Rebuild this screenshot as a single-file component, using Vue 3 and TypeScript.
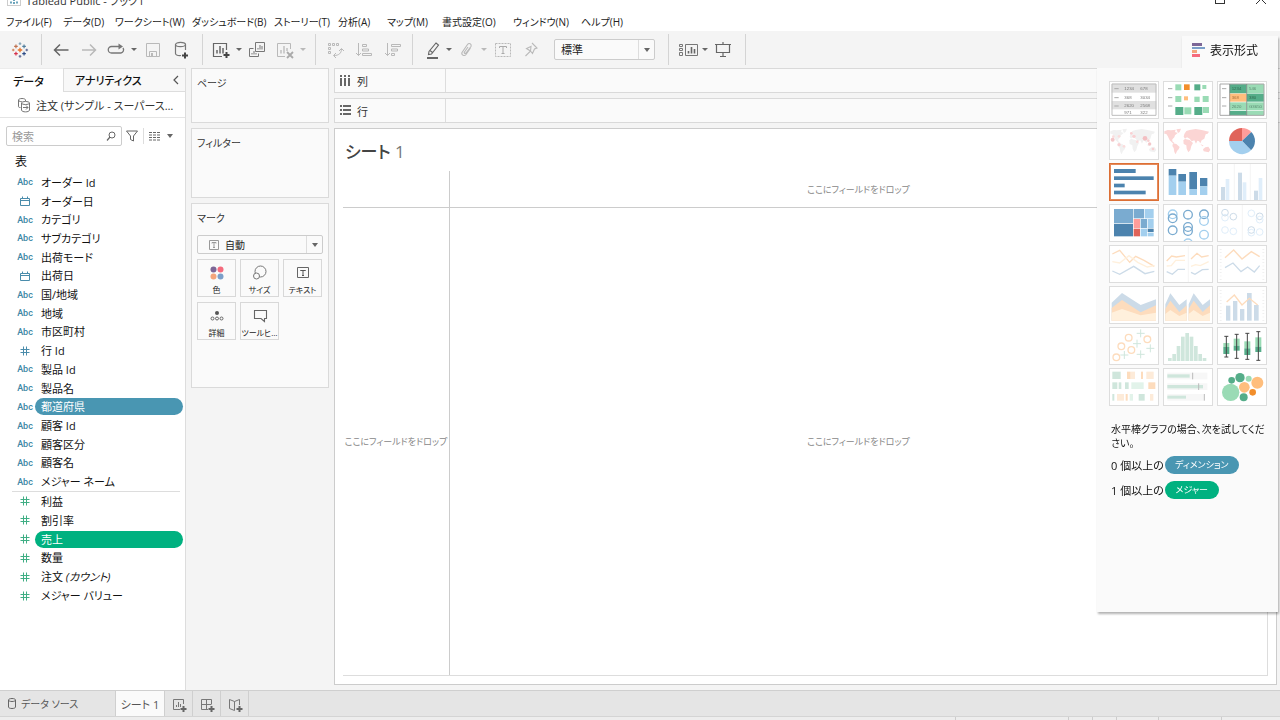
<script setup lang="ts">
import { ref } from 'vue'

/* ---------- svg markup helpers ---------- */
const rect = (x: number, y: number, w: number, h: number, fill: string) =>
  `<rect x="${x}" y="${y}" width="${w}" height="${h}" fill="${fill}"/>`
const disc = (x: number, y: number, r: number, fill: string) =>
  `<circle cx="${x}" cy="${y}" r="${r}" fill="${fill}"/>`
const ring = (x: number, y: number, r: number, stroke: string, w = 4) =>
  `<circle cx="${x}" cy="${y}" r="${r}" fill="none" stroke="${stroke}" stroke-width="${w}"/>`
const line = (d: string, stroke: string, w = 4) =>
  `<path d="${d}" fill="none" stroke="${stroke}" stroke-width="${w}"/>`
const area = (d: string, fill: string) => `<path d="${d}" fill="${fill}"/>`
const label = (x: number, y: number, t: string, fill = '#777') =>
  `<text x="${x}" y="${y}" font-size="13" font-family="Liberation Sans, sans-serif" fill="${fill}">${t}</text>`

/* ---------- palette ---------- */
const LG = '#9adbb5', DG = '#55ad89', OR = '#f28e2b', PE = '#ffbe7d'
const DB = '#4c83ae', MB = '#7aabd0', LB = '#a3cfee'
const fB = '#ccdbe8', fLB = '#e0eefa', fO = '#fddcbd', fY = '#fff0dc', fG = '#cfe6dc', fLG = '#e2f3ea'

const world = [
  'M4 28L14 24L24 25L38 23L36 30L44 33L36 40L34 46L28 52L28 58L34 63L30 64L20 55L14 42L10 36L4 35Z',
  'M40 22L54 20L50 30L45 33Z',
  'M30 64L40 66L50 75L47 82L42 87L38 97L34 90L32 78L28 72Z',
  'M62 44L64 36L70 27L80 24L98 21L116 24L138 29L134 35L128 37L124 50L116 55L112 64L108 58L103 56L99 65L94 55L86 58L80 50L72 46L66 50Z',
  'M61 55L66 51L80 54L90 63L85 72L82 84L76 91L71 80L70 70L62 66Z',
  'M120 82L127 76L136 74L142 83L137 91L122 88Z',
  'M112 66L122 71L118 73Z',
].join('')

const dashes = (x: number) => [23, 50, 75].map((y) => line(`M${x} ${y}h13`, '#aaa', 3)).join('')

const thumbs = [
  { name: 'テキスト表', art: rect(8, 8, 134, 27, '#e0e0e0') + rect(8, 60, 134, 25, '#e0e0e0') + line('M9 9H141V103H9Z', '#bdbdbd', 3) + dashes(16)
    + label(46, 28, '1234') + label(94, 28, '678') + label(46, 53, '368') + label(94, 53, '3034') + label(46, 77, '2620') + label(94, 77, '2568') + label(46, 99, '971') + label(94, 99, '322') },
  { name: 'ヒート マップ', art: dashes(15) + rect(37, 10, 18, 18, LG) + rect(63, 10, 17, 17, OR) + rect(94, 10, 18, 18, DG) + rect(118, 12, 12, 12, LG)
    + rect(37, 45, 18, 18, LG) + rect(63, 46, 12, 12, PE) + rect(94, 47, 16, 16, LG) + rect(119, 45, 18, 18, LG)
    + rect(37, 78, 24, 24, DG) + rect(64, 79, 21, 21, LG) + rect(94, 78, 24, 24, DG) + rect(120, 78, 18, 18, LG) },
  { name: 'ハイライト表', art: rect(38, 9, 51, 28, DG) + rect(90, 9, 51, 28, LG) + rect(38, 38, 51, 24, PE) + rect(90, 38, 51, 24, DG)
    + rect(38, 64, 51, 24, LG) + rect(90, 64, 51, 24, LG) + rect(38, 90, 51, 13, DG) + rect(90, 90, 51, 13, LG) + line('M9 9H141V103H9Z', '#a8a8a8', 3) + line('M38 9V103M89 9V103', '#777', 2) + dashes(15)
    + label(44, 28, '1234', '#2f6b50') + label(96, 28, '546', '#5a8b70') + label(44, 54, '368', '#a8703a') + label(96, 54, '380', '#2f6b50') + label(44, 80, '2620', '#5a8b70') + label(96, 80, 'G3650', '#5a8b70') },
  { name: '記号マップ', art: area(world, '#f1f1f1') + disc(11, 53, 6, '#f3c6c8') + disc(30, 43, 4, '#fbdcdc') + disc(67, 34, 4, '#f9d0d2') + disc(75, 43, 5, '#f9d0d2') + disc(108, 49, 7, '#f3bfc2')
    + disc(118, 56, 4, '#f9d0d2') + disc(122, 66, 5, '#f3c6c8') + disc(30, 68, 5, '#f9d0d2') + disc(45, 73, 4, '#fbdcdc') + disc(85, 59, 4, '#fbdcdc') + disc(132, 81, 4, '#f9d0d2') + disc(13, 44, 4, '#fbdcdc') },
  { name: 'マップ', art: area(world, '#fbd5d4') },
  { name: '円グラフ', art: area('M75 57H36A39 39 0 0 1 75 18Z', '#e0645a') + area('M75 57V18A39 39 0 0 1 103 30Z', '#ff9d9a') + area('M75 57L103 30A39 39 0 0 1 102 85Z', DB) + area('M75 57L102 85A39 39 0 0 1 36 57Z', LB) },
  { name: '水平棒', art: rect(15, 18, 65, 12, DB) + rect(15, 40, 119, 11, DB) + rect(15, 62, 32, 11, DB) + rect(15, 83, 95, 11, DB) },
  { name: '積み上げ棒', art: rect(17, 18, 23, 20, DB) + rect(17, 38, 23, 58, LB) + rect(46, 33, 23, 23, DB) + rect(46, 56, 23, 40, LB) + rect(79, 27, 23, 51, DB) + rect(79, 78, 23, 18, LB) + rect(111, 45, 22, 25, DB) + rect(111, 70, 22, 26, LB) },
  { name: '並列棒', art: line('M52 3V111M100 3V111', '#eee', 2) + rect(12, 72, 12, 39, fB) + rect(26, 48, 11, 63, fLB) + rect(63, 29, 12, 82, fB) + rect(77, 58, 11, 53, fLB) + rect(111, 83, 12, 28, fB) + rect(125, 45, 11, 66, fLB) },
  { name: 'ツリーマップ', art: rect(15, 15, 57, 43, MB) + rect(15, 60, 57, 37, DB) + rect(74, 15, 31, 28, MB) + rect(107, 15, 27, 28, LB) + rect(74, 45, 19, 27, '#ff9d9a') + rect(95, 45, 19, 27, MB) + rect(116, 45, 18, 27, LB)
    + rect(74, 74, 19, 23, '#e0645a') + rect(95, 74, 19, 23, LB) + rect(116, 74, 18, 10, DB) + rect(116, 86, 18, 11, LB) },
  { name: '円ビュー', art: ring(29, 31, 13, LB) + ring(29, 43, 13, MB) + ring(29, 79, 13, MB) + ring(75, 32, 13, MB) + ring(75, 69, 13, MB) + ring(75, 81, 13, MB) + ring(75, 118, 13, LB) + ring(123, 31, 13, MB) + ring(123, 51, 13, LB) + ring(123, 92, 13, LB) },
  { name: '並列円', art: line('M76 3V111', '#eee', 2) + ring(24, 26, 10, fB, 3) + ring(24, 41, 10, fLB, 3) + ring(49, 38, 10, fB, 3) + ring(24, 78, 10, fLB, 3) + ring(49, 82, 10, fLB, 3) + ring(103, 28, 10, fLB, 3) + ring(128, 37, 10, fB, 3) + ring(128, 47, 10, fLB, 3) + ring(103, 78, 10, fB, 3) + ring(103, 86, 10, fLB, 3) + ring(128, 84, 10, fLB, 3) },
  { name: '折れ線 (連続)', art: line('M10 27L32 16L62 52L80 34L105 46L136 64', fO) + line('M10 50L32 54L60 32L86 52L115 66L136 62', fY) + line('M10 78L32 88L74 64L108 86L136 79', fB) },
  { name: '折れ線 (不連続)', art: line('M76 3V111', '#eee', 2) + line('M11 48L26 33L40 36L66 32M84 42L102 25L116 36L137 32', fO) + line('M11 63L25 62L38 46L66 46M84 64L98 59L112 62L137 50', fY) + line('M11 80L28 88L45 73L66 73M84 82L96 88L118 74L137 73', fB) },
  { name: '二重線', art: line('M11 12V104M139 12V104', '#ececec', 6).replace('/>', ' stroke-dasharray="2 8"/>') + line('M24 38L50 15L75 42L103 20L128 35', fO) + line('M24 68L48 54L72 80L92 66L112 81L128 62', fB) },
  { name: '面グラフ (連続)', art: area('M8 50L39 21L95 57L141 40V104H8Z', fB) + area('M8 66L39 42L95 79L141 58V104H8Z', fO) + area('M8 80L39 69L95 88L141 80V104H8Z', fY) },
  { name: '面グラフ (不連続)', art: [7, 77].map((x) => area(`M${x} 55L${x + 15} 22L${x + 42} 57L${x + 64} 40V104H${x}Z`, fB) + area(`M${x} 68L${x + 15} 44L${x + 42} 78L${x + 64} 58V104H${x}Z`, fO) + area(`M${x} 84L${x + 15} 72L${x + 42} 90L${x + 64} 80V104H${x}Z`, fY)).join('') },
  { name: '二重の組み合わせ', art: line('M11 12V104M139 12V104', '#ececec', 6).replace('/>', ' stroke-dasharray="2 8"/>') + rect(27, 59, 13, 45, fB) + rect(48, 45, 13, 59, fB) + rect(69, 69, 13, 35, fB) + rect(90, 21, 14, 83, fB) + rect(111, 57, 14, 47, fB) + line('M29 48L52 27L75 57L97 37L122 57', fO) },
  { name: '散布図', art: ring(59, 32, 10, fO) + ring(115, 37, 10, fO) + ring(37, 58, 10, fO) + ring(67, 69, 10, fO) + ring(22, 91, 10, fO) + [[95, 19], [84, 50], [46, 84], [95, 82], [124, 64]].map(([x, y]) => line(`M${x - 12} ${y}h24M${x} ${y - 12}v24`, fG, 3)).join('') },
  { name: 'ヒストグラム', art: [93, 81, 57, 29, 18, 29, 57, 81, 93].map((y, i) => rect(15 + i * 13, y, 11, 102 - y, fG)).join('') },
  { name: '箱ヒゲ図', art: [[28, 28, 48, 60, 81, 90], [59, 22, 35, 56, 71, 94], [91, 19, 43, 64, 84, 97], [124, 14, 31, 59, 75, 100]].map(([x, a, b, c, d, e]) => rect(x - 9, b, 18, c - b, LG) + rect(x - 9, c, 18, d - c, DG) + line(`M${x} ${a}V${e}M${x - 6} ${a}h12M${x - 6} ${e}h12`, '#444', 3)).join('') },
  { name: 'ガント ビュー', art: rect(10, 11, 25, 22, fG) + rect(54, 11, 11, 22, fO) + rect(66, 11, 12, 22, '#fdebd9') + rect(96, 11, 6, 22, fO) + rect(112, 11, 22, 22, '#fdebd9')
    + rect(10, 43, 15, 20, fG) + rect(29, 43, 8, 20, fG) + rect(48, 43, 11, 20, fG) + rect(67, 43, 37, 20, fLG) + rect(118, 43, 21, 20, fO)
    + rect(10, 78, 6, 20, fG) + rect(24, 78, 21, 20, '#fdebd9') + rect(50, 78, 6, 20, fO) + rect(62, 78, 10, 20, fLG) + rect(89, 78, 18, 20, fG) + rect(123, 78, 10, 20, '#fdebd9') },
  { name: 'ブレット グラフ', art: rect(13, 14, 120, 20, '#f7f7f7') + rect(13, 46, 120, 20, '#f7f7f7') + rect(13, 78, 110, 20, '#f7f7f7') + rect(13, 19, 67, 10, fG) + rect(13, 51, 107, 10, fG) + rect(13, 83, 56, 9, fG) + line('M89 14v20M107 46v20M124 78v20', '#bbb', 3) },
  { name: 'パックバブル', art: disc(41, 73, 26, LG) + disc(44, 37, 10, DG) + disc(69, 29, 14, DG) + disc(95, 32, 9, LG) + disc(82, 58, 16, PE) + disc(121, 44, 18, PE) + disc(107, 73, 10, OR) + disc(80, 88, 12, DG) },
]

/* ---------- toolbar glyphs, drawn in a 20 x 20 box ---------- */
const s = (d: string, c = '#666', w = 1) => line(d, c, w)
const plus = (x: number, y: number, c = '#555') => s(`M${x - 3} ${y}h6M${x} ${y - 3}v6`, c, 2)
const cross = (x: number, y: number, r: number, c: string, w = 1) => s(`M${x - r} ${y}h${r * 2}M${x} ${y - r}v${r * 2}`, c, w)
const G = '#b9b9b9'

const glyphs: Record<string, string> = {
  logo: cross(10, 10, 2.5, '#e8762c', 1.5) + cross(5.5, 6, 2, '#c0714f', 1.3) + cross(14.5, 6, 2, '#4f7d9c', 1.3) + cross(5.5, 14, 2, '#d6304a', 1.3) + cross(14.5, 14, 2, '#2c4a86', 1.3)
    + cross(10, 3, 1.5, '#7a9db3', 1.2) + cross(10, 17, 1.5, '#5b6591', 1.2) + cross(2.5, 10, 1.5, '#d3835c', 1.2) + cross(17.5, 10, 1.5, '#5b6591', 1.2),
  back: s('M17.500 10H3.500M9 4.500L3.500 10L9 15.500', '#666', 1.5),
  forward: s('M3 10H16.500M11 4.500L16.500 10L11 15.500', G, 1.5),
  redo: s('M15 13H5.500A3.200 3.200 0 0 1 5.500 6.500H13.500M15 13A3.200 3.200 0 0 0 17 8', '#777', 1.3) + area('M12.500 3.500L17 6.500L12.500 9.500Z', '#777'),
  save: s('M3.500 3.500H16.500V16.500H3.500Z M6.500 16V11.500H13.500V16', G, 1) + rect(8, 13, 2, 3, G),
  source: s('M4.500 4.500V13.500C4.500 15 7 16 10 15.500M14.500 4.500V10', '#777', 1.2) + '<ellipse cx="9.500" cy="4.500" rx="5" ry="2.200" fill="none" stroke="#777" stroke-width="1.200"/>' + plus(14, 15.5, '#444'),
  sheetAdd: s('M15.500 10V3.500H2.500V16.500H11', '#666', 1.2) + s('M6 13.500V10M9 13.500V6M12 13.500V8', '#666', 1.5) + plus(15.5, 15, '#444'),
  duplicate: s('M8.500 2.500H17.500V11.500H8.500ZM6.500 8.500H2.500V16.500H11.500V13.500', '#777') + s('M11 9.500V8M13 9.500V5M15 9.500V6M5 14.500V13M7 14.500V11M9 14.500V13', '#777'),
  clear: s('M15.500 9V3.500H2.500V16.500H10', G) + s('M6 13.500V10M9 13.500V6M12 11V8', G, 1.3) + s('M12 12L18 18M18 12L12 18', '#aaa', 1.8),
  swap: s('M3.500 3.500h2v2h-2zM7.500 3.500h2v2h-2zM11.500 3.500h2v2h-2zM3.500 7.500h2v2h-2zM3.500 11.500h2v2h-2z', G) + s('M16.500 9C16.500 13 14 15.500 9 15.500M14 11L16.500 8.500L19 11M11 13L8.500 15.500L11 18', G),
  sortUp: s('M4.500 3V15.500M2 13L4.500 15.500L7 13', G) + s('M8.500 4.500h4v2h-4zM8.500 9h6v2h-6zM8.500 13.500h9v2h-9z', G),
  sortDown: s('M4.500 3V15.500M2 13L4.500 15.500L7 13', G) + s('M8.500 4.500h9v2h-9zM8.500 9h6v2h-6zM8.500 13.500h3v2h-3z', G),
  pen: s('M14 3L16.500 5L9.500 14L6.500 14.500L7 11.500ZM8 10.500L10.500 12.500', '#666', 1.1) + rect(5, 17, 11, 2, '#666'),
  clip: s('M14.500 8L10 14.500C8.500 16.500 5 15 6 12.500L11.500 4.500C13 2.500 16 4 15 6.500L10 13C9 14 7.500 13 8.500 12L12 7', G, 1.1),
  textBox: s('M2.500 3.500H17.500V16.500H2.500Z', G).replace('/>', ' stroke-dasharray="2 1"/>') + s('M6.500 8V6.500H13.500V8M10 6.500V13.500M8.500 13.500H11.500', '#aaa'),
  pin: s('M11 3L16 8L13.500 9L11.500 13.500L9.500 11L4.500 16M9.500 11L5.500 8.500L10 6.500Z', G, 1.1),
  fit: s('M1.500 4.500h3v2h-3zM1.500 8.500h3v2h-3zM1.500 12.500h3v3h-3zM7.500 4.500H19.500V15.500H7.500Z', '#777') + s('M10.500 13.500V11M13.500 13.500V7M16.500 13.500V9', '#666', 1.6),
  present: s('M2 4.500H18M3.500 4.500V12.500H16.500V4.500M10 2V4M10 12.500V16M7 16.500H13', '#666', 1.2),
}

interface Tool { icon?: string; label: string; width: string }
const caret = (label: string, width = 'w8'): Tool => ({ label, width })
const tool = (icon: string, label: string, width = 'w28'): Tool => ({ icon, label, width })
const groups: { cls: string; tools: Tool[] }[] = [
  { cls: 'g1', tools: [tool('back', '元に戻す'), tool('forward', 'やり直し'), tool('redo', '再生', 'w26'), caret('再生メニュー', 'w10'), tool('save', '保存'), tool('source', '新しいデータ ソース')] },
  { cls: 'g2', tools: [tool('sheetAdd', '新しいワークシート'), caret('新規メニュー'), tool('duplicate', '複製'), tool('clear', 'クリア'), caret('クリア メニュー')] },
  { cls: 'g3', tools: [tool('swap', '行と列の交換', 'w29'), tool('sortUp', '昇順', 'w29'), tool('sortDown', '降順', 'w29')] },
  { cls: 'g4', tools: [tool('pen', 'ハイライト', 'w26'), caret('ハイライト メニュー'), tool('clip', 'グループ', 'w26'), caret('グループ メニュー', 'w10'), tool('textBox', 'ラベル'), tool('pin', '軸の固定')] },
]
const groupLast: Tool[] = [tool('fit', 'カードの表示', 'w26'), caret('カード メニュー'), tool('present', 'プレゼンテーション')]
const muted = ['クリア メニュー', 'グループ メニュー']

const menus = ['ファイル(F)', 'データ(D)', 'ワークシート(W)', 'ダッシュボード(B)', 'ストーリー(T)', '分析(A)', 'マップ(M)', '書式設定(O)', 'ウィンドウ(N)', 'ヘルプ(H)']

type Kind = 'abc' | 'date' | 'num'
const dims: [Kind, string][] = [
  ['abc', 'オーダー Id'], ['date', 'オーダー日'], ['abc', 'カテゴリ'], ['abc', 'サブカテゴリ'], ['abc', '出荷モード'], ['date', '出荷日'],
  ['abc', '国/地域'], ['abc', '地域'], ['abc', '市区町村'], ['num', '行 Id'], ['abc', '製品 Id'], ['abc', '製品名'], ['abc', '都道府県'],
  ['abc', '顧客 Id'], ['abc', '顧客区分'], ['abc', '顧客名'], ['abc', 'メジャー ネーム'],
]
const measures = ['利益', '割引率', '売上', '数量', '注文 (カウント)', 'メジャー バリュー']
const selected = ref(['都道府県', '売上'])

const marks = [
  { label: '色', art: disc(6.5, 6.5, 3, '#7d6797') + disc(13.5, 6.5, 3, '#f56b7d') + disc(6.5, 13.5, 3, '#f4a57c') + disc(13.5, 13.5, 3, '#7b9fc9') },
  { label: 'サイズ', art: ring(10.5, 8.5, 5.5, '#777', 1) + `<circle cx="6.500" cy="13" r="3" fill="#fafafa" stroke="#777" stroke-width="1"/>` },
  { label: 'テキスト', art: s('M4.500 4.500H15.500V14.500H4.500Z', '#666') + s('M7.500 8V7.500H12.500V8M10 7.500V12.500M9 12.500H11', '#555') },
  { label: '詳細', art: disc(10, 7, 2, '#555') + ring(5.5, 12.500, 1.5, '#666', 1) + ring(10, 12.500, 1.5, '#666', 1) + ring(14.5, 12.500, 1.5, '#666', 1) },
  { label: 'ツールヒ…', art: s('M4.500 4.500H16.500V12.500H14.500V15.500L11 12.500H4.500Z', '#666', 1.1) },
]
const sheetButtons = [
  { label: '新しいワークシート', art: s('M12.500 8V3.500H2.500V13.500H9', '#777') + s('M5.500 11V9M7.500 11V6M9.500 11V8', '#777') + plus(12.5, 13, '#666') },
  { label: '新しいダッシュボード', art: s('M12.500 8V3.500H2.500V13.500H9M7.500 3.500V13.500M2.500 8.500H12.500', '#777') + plus(12.5, 13, '#666') },
  { label: '新しいストーリー', art: s('M12.500 9V3.500L7.500 5.500L2.500 3.500V12.500L7.500 14.500V5.500', '#777') + plus(12.5, 13, '#666') },
]
</script>

<template>
  <div class="app" lang="ja">
    <header class="titlebar">
      <svg class="app-icon" viewBox="0 0 14 14" aria-hidden="true">
        <rect x="0.500" y="0.500" width="13" height="13" fill="#fff" stroke="#ccc" />
        <path d="M7 5v4M5 7h4M4 3v2M10 3v2M4 9.500v2M10 9.500v2M7 10v2M2 7h2M10 7h2" stroke="#3c87a5" stroke-width="1.500" />
      </svg>
      <span class="title">Tableau Public - ブック1</span>
      <span class="window-box"></span>
      <svg class="window-close" viewBox="0 0 10 10" aria-hidden="true"><path d="M0 0L10 10M10 0L0 10" stroke="#333" stroke-width="1" /></svg>
    </header>

    <nav class="menubar">
      <button v-for="m in menus" :key="m" type="button">{{ m }}</button>
    </nav>

    <div class="toolbar">
      <svg class="logo" viewBox="0 0 20 20" aria-hidden="true" v-html="glyphs.logo"></svg>
      <div v-for="g in groups" :key="g.cls" class="group" :class="g.cls">
        <button v-for="t in g.tools" :key="t.label" type="button" class="tool" :class="t.width" :aria-label="t.label">
          <svg v-if="t.icon" viewBox="0 0 20 20" v-html="glyphs[t.icon]"></svg>
          <i v-else class="caret" :class="{ muted: muted.includes(t.label) }"></i>
        </button>
      </div>
      <span class="select fit-select">
        <select aria-label="ビューのサイズ"><option>標準</option></select>
        <i class="caret dark"></i>
      </span>
      <div class="group g5">
        <button v-for="t in groupLast" :key="t.label" type="button" class="tool" :class="t.width" :aria-label="t.label">
          <svg v-if="t.icon" viewBox="0 0 20 20" v-html="glyphs[t.icon]"></svg>
          <i v-else class="caret"></i>
        </button>
      </div>
    </div>

    <main class="workspace">
      <aside class="data-pane">
        <div class="pane-tabs">
          <button type="button" class="on">データ</button>
          <button type="button" class="off">
            アナリティクス
            <svg viewBox="0 0 6 10" aria-hidden="true"><path d="M5 1L1 5L5 9" fill="none" stroke="#555" stroke-width="1.200" /></svg>
          </button>
        </div>
        <div class="source">
          <svg viewBox="0 0 16 16" aria-hidden="true">
            <path d="M4.500 10.500C2.500 10.500 2.500 10 2.500 9V3C2.500 1 9.500 1 9.500 3V4M2.500 3C2.500 5 6 4.500 6 4.500M5.500 6V13C5.500 15.500 13.500 15.500 13.500 13V6C13.500 4 5.500 4 5.500 6C5.500 8 13.500 8 13.500 6M7 10.500H12M10 8.500L12 10.500L10 12.500" fill="none" stroke="#777" />
          </svg>
          <span>注文 (サンプル - スーパース…</span>
        </div>
        <div class="search">
          <label class="search-box">
            <input type="text" placeholder="検索" aria-label="検索" />
            <svg viewBox="0 0 10 10" aria-hidden="true"><circle cx="6" cy="4" r="3" fill="none" stroke="#666" /><path d="M4 6L1 9.500" stroke="#666" stroke-width="1.200" /></svg>
          </label>
          <button type="button" aria-label="フィルター"><svg viewBox="0 0 12 12"><path d="M0.500 1H11.500L7.500 6V11L4.500 9.500V6Z" fill="none" stroke="#666" /></svg></button>
          <button type="button" class="view-as" aria-label="表示方法"><svg viewBox="0 0 12 10"><path d="M0 1.500H12M0 4H12M0 6.500H12M0 9H12" stroke="#666" stroke-width="1.200" stroke-dasharray="3 1" /></svg></button>
          <i class="caret dark"></i>
        </div>
        <h2>表</h2>
        <ul class="fields dims">
          <li v-for="[k, n] in dims" :key="n" :class="{ sel: selected.includes(n) }">
            <span class="kind">
              <template v-if="k === 'abc'">Abc</template>
              <svg v-else-if="k === 'date'" viewBox="0 0 10 10"><path d="M0.500 2.500H9.500V9.500H0.500ZM0.500 4.500H9.500M2.500 0.500V2.500M7.500 0.500V2.500" fill="none" stroke="#4a8cab" /></svg>
              <svg v-else viewBox="0 0 10 10"><path d="M3.500 0.500V9.500M6.500 0.500V9.500M0.500 3.500H9.500M0.500 6.500H9.500" fill="none" stroke="#4a8cab" /></svg>
            </span>
            <span class="name">{{ n }}</span>
          </li>
        </ul>
        <ul class="fields measures">
          <li v-for="n in measures" :key="n" :class="{ sel: selected.includes(n) }">
            <span class="kind"><svg viewBox="0 0 10 10"><path d="M3.500 0.500V9.500M6.500 0.500V9.500M0.500 3.500H9.500M0.500 6.500H9.500" fill="none" stroke="#3fae84" /></svg></span>
            <span class="name"><template v-if="n === '注文 (カウント)'">注文 <em>(カウント)</em></template><template v-else>{{ n }}</template></span>
          </li>
        </ul>
      </aside>

      <section class="cards">
        <div class="card pages"><h3>ページ</h3></div>
        <div class="card filters"><h3>フィルター</h3></div>
        <div class="card marks">
          <h3>マーク</h3>
          <span class="select mark-select">
            <svg viewBox="0 0 10 10" aria-hidden="true"><path d="M0.500 0.500H9.500V9.500H0.500ZM3 3.500V2.500H7V3.500M5 2.500V7.500M4 7.500H6" fill="none" stroke="#999" /></svg>
            <select aria-label="マークの種類"><option>自動</option></select>
            <i class="caret dark"></i>
          </span>
          <div class="mark-grid">
            <button v-for="m in marks" :key="m.label" type="button">
              <svg viewBox="0 0 20 20" v-html="m.art"></svg>
              <span>{{ m.label }}</span>
            </button>
          </div>
        </div>
      </section>

      <section class="canvas">
        <div class="shelf">
          <div class="shelf-name"><svg viewBox="0 0 11 11" aria-hidden="true"><path d="M1 0v2M5 0v2M9 0v2M1 3v8M5 3v8M9 3v8" stroke="#666" stroke-width="2" /></svg>列</div>
        </div>
        <div class="shelf">
          <div class="shelf-name"><svg viewBox="0 0 11 11" aria-hidden="true"><path d="M0 1h2M0 5h2M0 9h2M3 1h8M3 5h8M3 9h8" stroke="#666" stroke-width="2" /></svg>行</div>
        </div>
        <div class="view">
          <h1><b>シート</b> 1</h1>
          <div class="drop-grid">
            <div class="corner"></div>
            <div class="drop columns">ここにフィールドをドロップ</div>
            <div class="drop rows">ここにフィールドをドロップ</div>
            <div class="drop body">ここにフィールドをドロップ</div>
          </div>
        </div>
      </section>
    </main>

    <footer class="sheets">
      <button type="button" class="data-source">
        <svg viewBox="0 0 8 11" aria-hidden="true"><path d="M0.500 2V9C0.500 11 7.500 11 7.500 9V2C7.500 0 0.500 0 0.500 2C0.500 4 7.500 4 7.500 2" fill="none" stroke="#666" /></svg>
        データ ソース
      </button>
      <button type="button" class="current">シート 1</button>
      <button v-for="b in sheetButtons" :key="b.label" type="button" class="add" :aria-label="b.label"><svg viewBox="0 0 16 16" v-html="b.art"></svg></button>
    </footer>
    <div class="status"><i class="s1"></i><i class="s2"></i><i class="s2"></i><i class="s3"></i><i class="s4"></i><i class="s5"></i></div>

    <aside class="show-me">
      <button type="button" class="show-tab">
        <svg viewBox="0 0 13 14" aria-hidden="true">
          <rect width="10" height="3" fill="#7d6797" /><rect y="4" width="13" height="2" fill="#7b9fc9" /><rect y="7" width="5" height="3" fill="#f4a57c" /><rect y="11" width="8" height="3" fill="#f56b7d" />
        </svg>
        表示形式
      </button>
      <div class="show-body">
        <div class="thumbs">
          <button v-for="(t, i) in thumbs" :key="t.name" type="button" :class="{ picked: i === 6 }" :aria-label="t.name">
            <svg viewBox="3 3 144 108" v-html="t.art"></svg>
          </button>
        </div>
        <p>水平棒グラフの場合、次を試してください。</p>
        <div class="need">0 個以上の <span class="pill dim">ディメンション</span></div>
        <div class="need">1 個以上の <span class="pill mea">メジャー</span></div>
      </div>
    </aside>
  </div>
</template>

<style>
html, body { margin: 0; background: #f4f4f4; }
</style>

<style scoped>
.app, .app button, .app input, .app select {
  font-family: "Open Sans", "Noto Sans CJK JP", sans-serif;
  font-feature-settings: "palt";
}
.app { position: relative; display: flex; flex-direction: column; height: 100vh; overflow: hidden; background: #f4f4f4; color: #333; font-size: 11px; }
.app *, .app *::before { box-sizing: border-box; }
button { border: 0; padding: 0; margin: 0; background: none; color: inherit; font-size: 11px; }
h1, h2, h3, p, ul { margin: 0; padding: 0; font-weight: 400; }
ul { list-style: none; }
svg { display: block; flex: none; }

.titlebar { display: flex; align-items: flex-end; height: 12px; padding: 0 14px 0 7px; overflow: hidden; background: #fff; flex: none; }
.app-icon { width: 14px; height: 14px; margin-bottom: 6px; }
.title { margin-left: 5px; line-height: 16px; margin-bottom: 3px; font-size: 11px; white-space: nowrap; }
.window-box { width: 10px; height: 10px; border: 1px solid #333; margin-left: auto; margin-bottom: 8px; }
.window-close { width: 10px; height: 10px; margin: 0 0 8px 31px; }

.menubar { display: grid; grid-template-columns: 57px 52px 77px 82px 64px 49px 55px 71px 68px auto; height: 19px; padding-left: 6px; background: #fff; flex: none; justify-content: start; }
.menubar button { text-align: left; white-space: nowrap; font-size: 10px; line-height: 21px; color: #222; }

.toolbar { display: flex; align-items: center; height: 37px; flex: none; }
.logo { width: 18px; height: 18px; margin: 0 12px 0 11px; }
.group { display: flex; align-items: center; height: 31px; border-left: 1px solid #d4d4d4; }
.g1 { padding: 0 7px 0 5px; }
.g2 { padding: 0 8px 0 4px; }
.g3 { padding: 0 5px 0 4px; }
.g4 { padding: 0 9px 0 6px; }
.g5 { margin-left: 13px; padding: 0 8px 0 6px; border-right: 1px solid #d4d4d4; }
.tool { display: flex; align-items: center; justify-content: center; height: 28px; flex: none; }
.tool svg { width: 20px; height: 20px; }
.w8 { width: 8px; } .w10 { width: 10px; } .w26 { width: 26px; } .w28 { width: 28px; } .w29 { width: 29px; }
.caret { width: 0; height: 0; border: 3px solid transparent; border-top: 3px solid #666; border-bottom: 0; flex: none; }
.caret.muted { border-top-color: #b9b9b9; }
.caret.dark { border-top: 4px solid #666; }

.select { display: flex; align-items: center; position: relative; border: 1px solid #ccc; border-radius: 2px; background: #fafafa; }
.select select { appearance: none; flex: 1; min-width: 0; height: 100%; border: 0; background: none; padding: 0; font-size: 11px; color: #222; }
.select::after { content: ""; position: absolute; right: 15px; top: 0; bottom: 0; width: 1px; background: #ddd; }
.select .caret { margin-right: 4px; }
.fit-select { width: 101px; height: 21px; flex: none; padding-left: 6px; }

.workspace { display: flex; flex: 1; min-height: 0; }
.data-pane { width: 186px; flex: none; background: #fff; border-right: 1px solid #ddd; }
.pane-tabs { display: flex; height: 24px; }
.pane-tabs button { color: #111; font-weight: 500; }
.pane-tabs .on { width: 63px; padding-right: 6px; border-top: 1px solid #ececec; }
.pane-tabs .off { flex: 1; display: flex; align-items: center; justify-content: space-between; padding: 0 6px 0 11px; background: #f8f8f8; border: 1px solid #ddd; border-right: 0; }
.pane-tabs .off svg { width: 6px; height: 10px; }
.source { display: flex; align-items: center; gap: 4px; height: 26px; padding-left: 16px; border-bottom: 1px solid #e4e4e4; white-space: nowrap; }
.source svg { width: 16px; height: 16px; }
.search { display: flex; align-items: center; height: 20px; margin: 8px 0 0 6px; }
.search-box { display: flex; align-items: center; width: 116px; height: 20px; border: 1px solid #ccc; border-radius: 2px; padding: 0 5px; }
.search-box input { flex: 1; min-width: 0; border: 0; outline: 0; padding: 0; background: none; font-size: 11px; }
.search-box input::placeholder { color: #999; }
.search-box svg { width: 10px; height: 10px; }
.search button { display: flex; justify-content: center; width: 20px; }
.search button svg { width: 12px; height: 12px; }
.search .view-as { width: 22px; height: 16px; align-items: center; border-left: 1px solid #ddd; margin: 0 2px 0 1px; }
.search .view-as svg { height: 10px; }
.data-pane h2 { height: 27px; padding: 6px 0 0 15px; font-size: 12px; line-height: 20px; color: #111; }
.fields { display: grid; grid-auto-rows: 1fr; }
.dims { height: 318px; }
.measures { height: 114px; grid-template-rows: 1px; }
.measures::before { content: ""; background: #ddd; margin: 0 5px 0 12px; }
.fields li { display: flex; align-items: center; padding: 0 2px 0 15px; }
.kind { display: flex; justify-content: center; width: 20px; font-size: 9px; font-weight: 500; line-height: 12px; color: #3c87a5; font-family: Roboto, sans-serif; }
.kind svg { width: 10px; height: 10px; }
.name { flex: 1; padding-left: 6px; line-height: 17px; border-radius: 9px; color: #111; white-space: nowrap; }
.dims .sel .name { background: #4996b2; color: #fff; }
.measures .sel .name { background: #00b180; color: #fff; }

.cards { display: flex; flex-direction: column; gap: 5px; width: 138px; margin-left: 5px; flex: none; }
.card { border: 1px solid #dadada; background: #fafafa; padding: 5px; }
.card h3 { font-size: 10px; line-height: 18px; color: #333; }
.pages { height: 55px; } .filters { height: 70px; } .marks { height: 185px; }
.mark-select { width: 126px; height: 19px; margin-top: 8px; padding-left: 11px; }
.mark-select svg { width: 10px; height: 10px; margin-right: 6px; }
.mark-select select { font-size: 10px; }
.mark-grid { display: grid; grid-template-columns: repeat(3, 39px); gap: 5px 4px; margin-top: 5px; }
.mark-grid button { display: flex; flex-direction: column; align-items: center; height: 38px; padding-top: 3px; border: 1px solid #d8d8d8; }
.mark-grid svg { width: 20px; height: 20px; }
.mark-grid span { font-size: 8px; line-height: 13px; color: #222; white-space: nowrap; }

.canvas { display: flex; flex-direction: column; gap: 5px; flex: 1; min-width: 0; margin: 0 0 5px 5px; }
.shelf { height: 25px; border: 1px solid #d9d9d9; border-right: 0; background: #fafafa; flex: none; }
.shelf-name { display: flex; align-items: center; gap: 6px; width: 111px; height: 100%; padding-left: 5px; border-right: 1px solid #ddd; }
.shelf-name svg { width: 11px; height: 11px; }
.view { display: flex; flex-direction: column; flex: 1; margin-right: 3px; padding: 0 8px 8px; border: 1px solid #ccc; background: #fff; }
.view h1 { height: 42px; padding: 10px 0 0 2px; font-size: 17px; line-height: 26px; color: #777; }
.view h1 b { font-weight: 500; color: #444; }
.drop-grid { flex: 1; display: grid; grid-template: 37px 1fr / 107px 1fr; border: solid #ddd; border-width: 0 1px 1px 0; }
.corner, .drop.rows { border-right: 1px solid #ccc; }
.corner, .drop.columns { border-bottom: 1px solid #ccc; }
.drop { display: flex; align-items: center; justify-content: center; font-size: 9px; color: #888; white-space: nowrap; }

.sheets { display: flex; height: 27px; flex: none; background: #e5e5e5; border-top: 1px solid #cfcfcf; border-bottom: 1px solid #d4d4d4; }
.sheets button { display: flex; align-items: center; border-right: 1px solid #cfcfcf; color: #555; }
.sheets .data-source { width: 116px; gap: 5px; padding-left: 8px; font-size: 10px; }
.data-source svg { width: 8px; height: 11px; }
.sheets .current { width: 49px; justify-content: center; background: #fafafa; }
.sheets .add { width: 28px; justify-content: center; }
.add svg { width: 16px; height: 16px; }
.status { display: flex; justify-content: flex-end; height: 3px; flex: none; background: #ededed; padding-right: 58px; }
.status i { width: 1px; border-left: 1px solid #ccc; }
.status .s1 { margin-right: 112px; } .status .s2 { margin-right: 23px; } .status .s3 { margin-right: 41px; } .status .s4 { margin-right: 62px; }

.show-me { position: absolute; top: 36px; right: 2px; display: flex; flex-direction: column; align-items: flex-end; width: 181px; filter: drop-shadow(1px 2px 1px rgba(0, 0, 0, 0.3)); }
.show-tab { display: flex; align-items: center; gap: 5px; width: 96px; height: 32px; padding: 0 0 4px 10px; background: #fafafa; font-size: 12px; color: #111; }
.show-tab svg { width: 13px; height: 14px; }
.show-body { width: 100%; height: 544px; background: #fafafa; padding: 13px 8px 0 12px; }
.thumbs { display: grid; grid-template-columns: repeat(3, 50px); gap: 3px 4px; }
.thumbs button { height: 38px; border: 1px solid #ddd; background: #fff; }
.thumbs svg { width: 48px; height: 36px; }
.thumbs .picked { border-color: #dc6f35; box-shadow: inset 0 0 0 1px #e58a5a; }
.show-body p { margin: 16px 0 6px 2px; font-size: 10px; line-height: 14px; color: #111; }
.need { display: flex; align-items: center; height: 18px; margin: 0 0 7px 2px; gap: 1px; color: #111; white-space: nowrap; }
.pill { height: 18px; line-height: 18px; border-radius: 9px; color: #fff; font-size: 9px; text-align: center; }
.dim { width: 74px; background: #4996b2; }
.mea { width: 54px; background: #00b180; }
</style>
